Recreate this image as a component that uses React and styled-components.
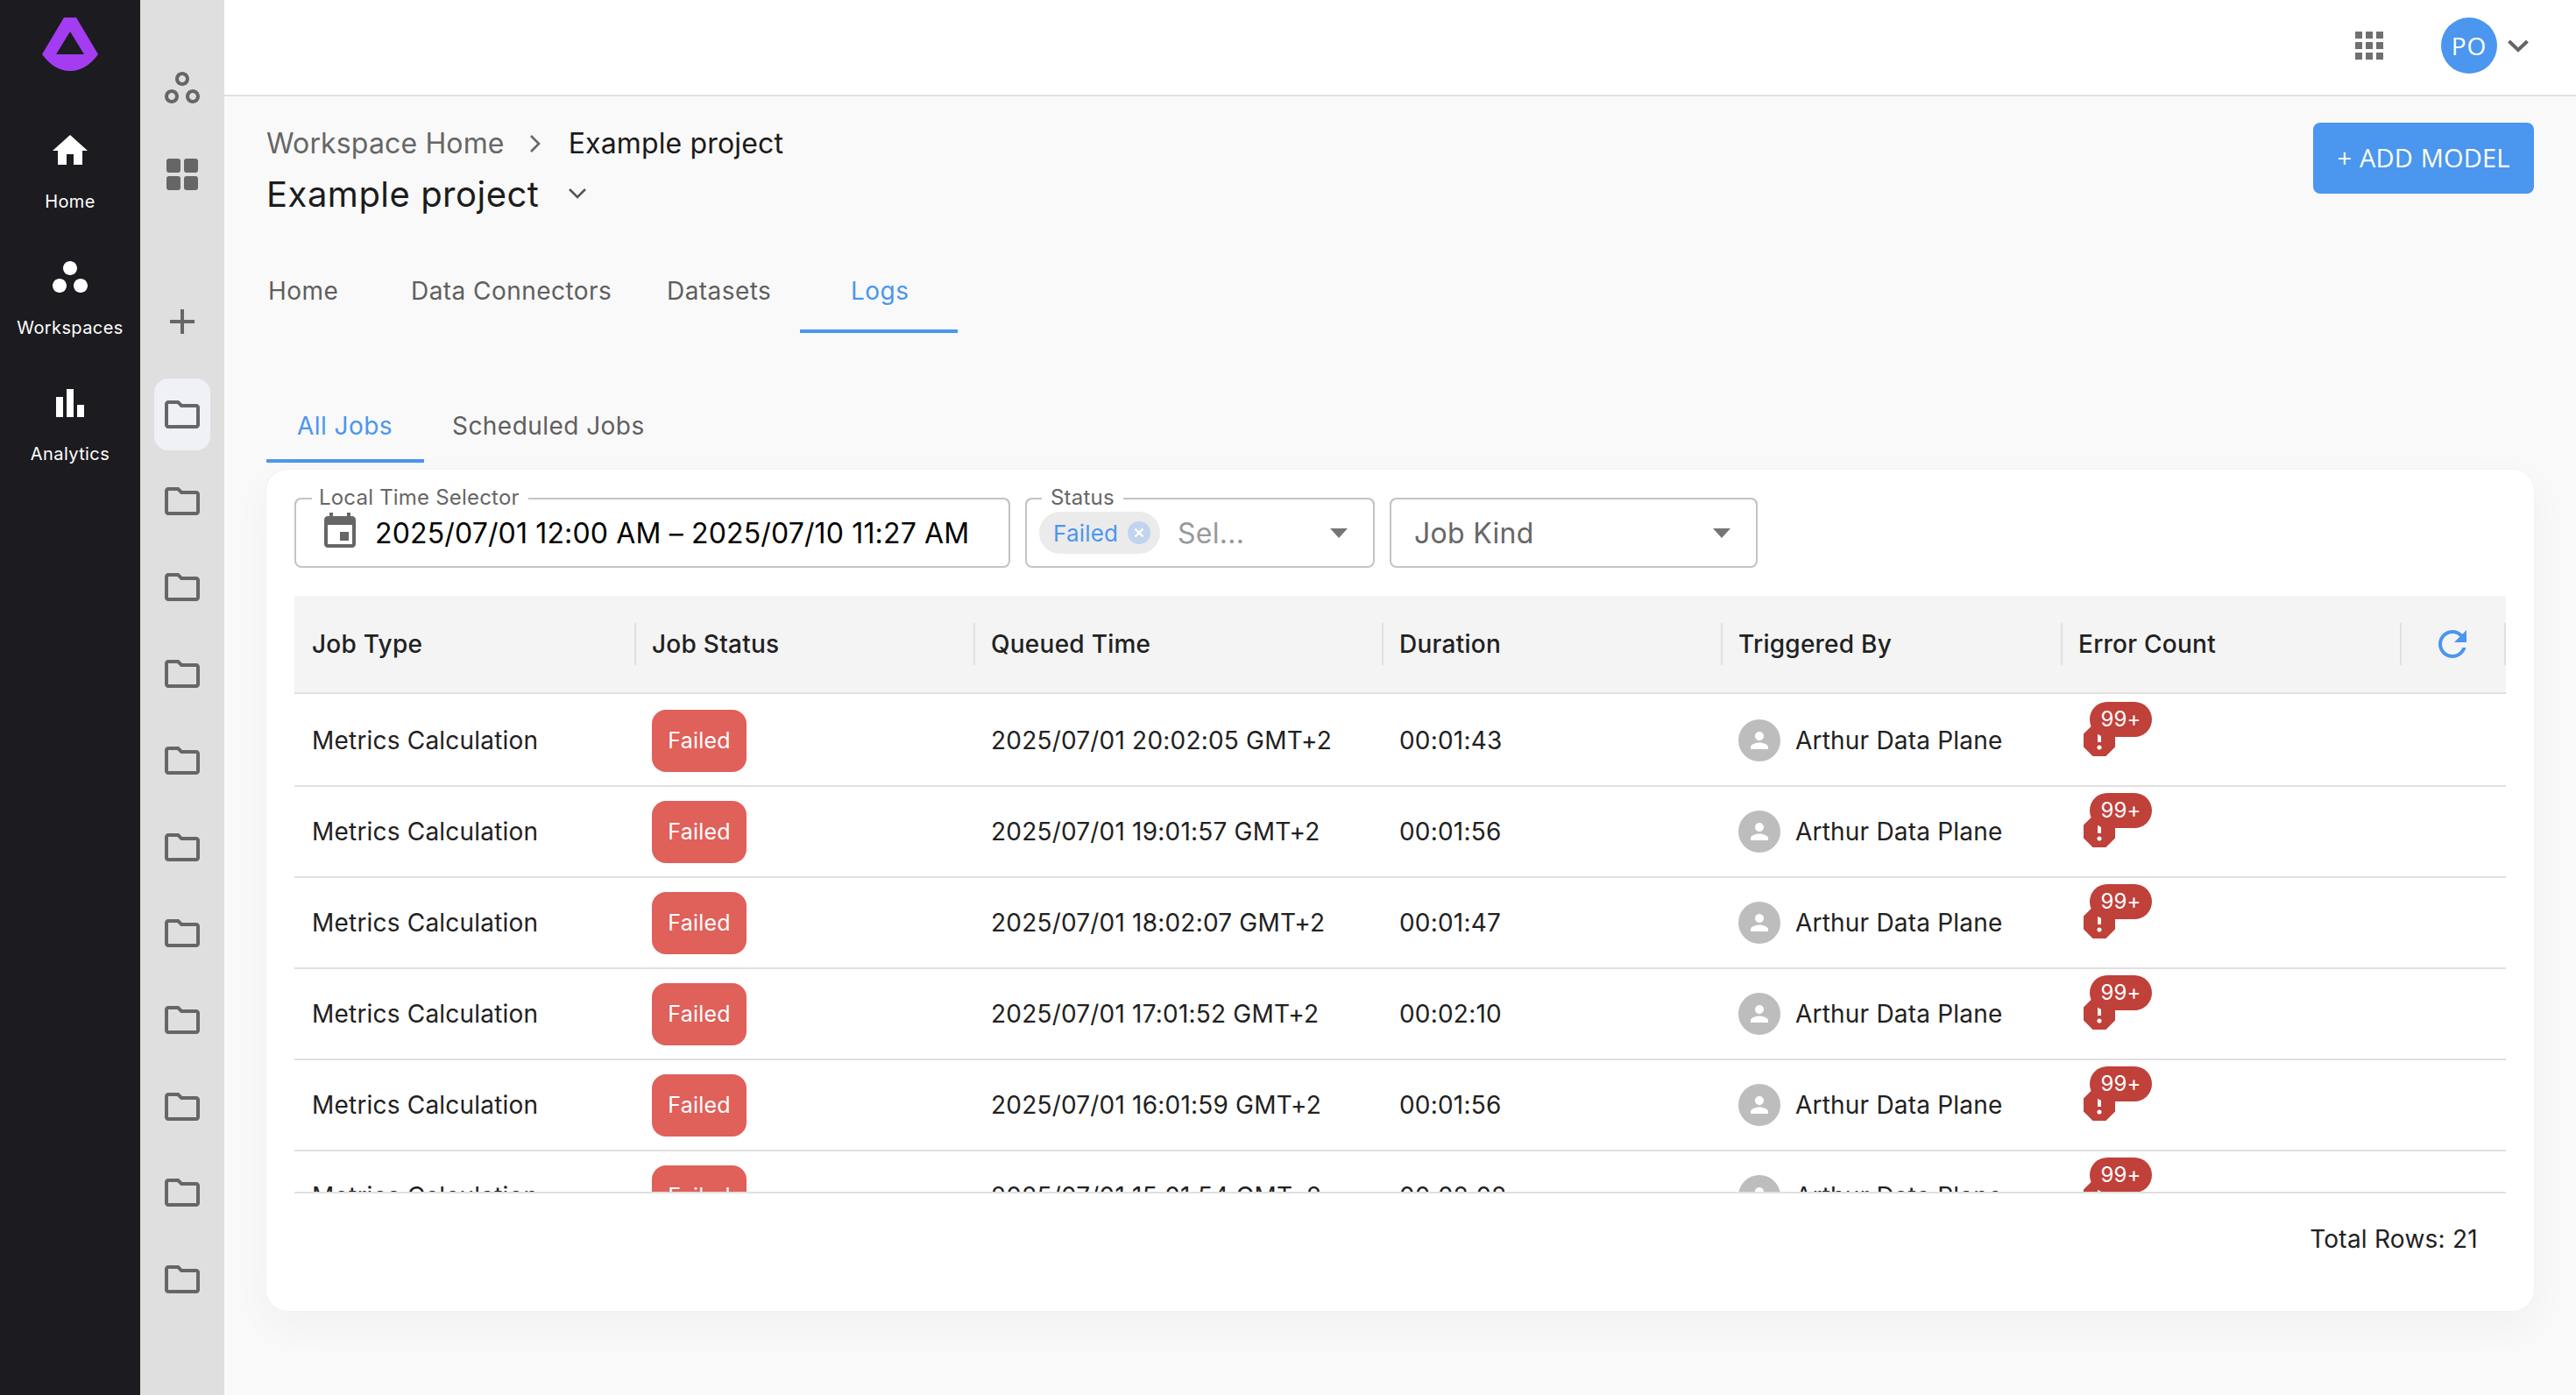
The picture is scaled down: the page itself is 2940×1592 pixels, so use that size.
import React from "react";
import styled, { createGlobalStyle } from "styled-components";

const Global = createGlobalStyle`
  html, body { margin: 0; padding: 0; background: #f9f9f9; }
  body { font-family: "Inter", "Liberation Sans", sans-serif; color: #212121; }
  * { box-sizing: border-box; }
`;

const Page = styled.div`
  display: flex;
  width: 2940px;
  height: 1592px;
  overflow: hidden;
`;

const Rail = styled.nav`
  width: 160px;
  flex: none;
  background: #1c1b20;
  display: flex;
  flex-direction: column;
  align-items: center;
  padding-top: 20px;
`;

const RailLogo = styled.svg`
  width: 64px;
  height: 61px;
  margin-bottom: 67px;
`;

const RailItem = styled.div`
  width: 160px;
  height: 144px;
  display: flex;
  flex-direction: column;
  align-items: center;
  color: #fff;
  svg { width: 48px; height: 48px; fill: #fff; }
`;

const RailLabel = styled.span`
  margin-top: 20px;
  font-size: 20px;
  line-height: 28px;
  letter-spacing: 0.4px;
  color: #fff;
`;

const SubRail = styled.aside`
  width: 96px;
  flex: none;
  background: #dfdfdf;
  display: flex;
  flex-direction: column;
  align-items: center;
  padding-top: 59px;
`;

const SubItem = styled.div`
  width: 64px;
  height: 82px;
  flex: none;
  margin-top: ${(p) => p.$mt || 0}px;
  margin-bottom: 16.7px;
  border-radius: 16px;
  background: ${(p) => (p.$active ? "#eff1f6" : "transparent")};
  display: flex;
  align-items: center;
  justify-content: center;
  svg { width: 48px; height: 48px; fill: #666; }
`;

const Main = styled.main`
  flex: 1;
  min-width: 0;
  display: flex;
  flex-direction: column;
  background: #f9f9f9;
`;

const Header = styled.header`
  height: 110px;
  flex: none;
  background: #fff;
  border-bottom: 2px solid #e0e0e0;
  display: flex;
  align-items: center;
  justify-content: flex-end;
  padding-right: 54px;
  padding-bottom: 4px;
`;

const Apps = styled.div`
  display: grid;
  grid-template-columns: repeat(3, 8px);
  grid-auto-rows: 8px;
  gap: 4px;
  margin-right: 66px;
  span { background: #707070; }
`;

const UserAvatar = styled.div`
  width: 64px;
  height: 64px;
  border-radius: 50%;
  background: #4b96ee;
  color: #fff;
  display: flex;
  align-items: center;
  justify-content: center;
  font-family: "Open Sans", sans-serif;
  font-size: 28px;
  letter-spacing: 1px;
`;

const UserChevron = styled.svg`
  width: 24px;
  height: 15px;
  margin-left: 12px;
  fill: none;
  stroke: #666;
  stroke-width: 4;
`;

const Content = styled.div`
  flex: 1;
  padding: 30px 48px 0;
  display: flex;
  flex-direction: column;
`;

const TopRow = styled.div`
  display: flex;
  justify-content: space-between;
  align-items: flex-start;
  height: 116px;
`;

const Crumbs = styled.div`
  height: 46px;
  padding-top: 1px;
  display: flex;
  align-items: center;
  font-size: 32px;
  line-height: 46px;
  letter-spacing: 0.15px;
  color: #666;
`;

const CrumbSeparator = styled.svg`
  width: 14px;
  height: 22px;
  margin: 0 31px 0 28px;
  fill: none;
  stroke: #666;
  stroke-width: 2.6;
`;

const CrumbCurrent = styled.span`
  color: #1a1a1a;
`;

const TitleRow = styled.div`
  height: 70px;
  display: flex;
  align-items: center;
`;

const Title = styled.h1`
  margin: 0;
  font-size: 40px;
  font-weight: 400;
  letter-spacing: 0.5px;
  color: #1c1c1c;
`;

const TitleChevron = styled.svg`
  width: 20px;
  height: 12px;
  margin-left: 34px;
  fill: none;
  stroke: #555;
  stroke-width: 2.6;
`;

const AddButton = styled.button`
  width: 252px;
  height: 81px;
  border: 0;
  border-radius: 8px;
  background: #4b96ee;
  color: #fff;
  font-family: "Open Sans", sans-serif;
  font-size: 29px;
  letter-spacing: 0.2px;
  word-spacing: 1px;
  padding: 0 0 2px;
`;

const TabBar = styled.div`
  display: flex;
  height: ${(p) => p.$h}px;
  margin-top: ${(p) => p.$mt}px;
`;

const Tab = styled.div`
  height: 100%;
  width: ${(p) => p.$w}px;
  flex: none;
  padding-left: ${(p) => p.$pad}px;
  padding-top: ${(p) => p.$top}px;
  font-size: 28px;
  line-height: 40px;
  letter-spacing: 0.45px;
  color: ${(p) => (p.$active ? "#4b96ee" : "#5f5f5f")};
  border-bottom: 4px solid ${(p) => (p.$active ? "#4b96ee" : "transparent")};
`;

const Card = styled.section`
  height: 960px;
  margin-top: 8px;
  padding: 32px 32px 0;
  background: #fff;
  border-radius: 24px;
  box-shadow: 0 0 0 1px #f2f2f2, 0 16px 48px rgba(0, 0, 0, 0.035);
`;

const Filters = styled.div`
  display: flex;
  gap: 17px;
  height: 80px;
`;

const Field = styled.fieldset`
  width: ${(p) => p.$w}px;
  height: 80px;
  margin: 0;
  padding: 2px 0 0;
  border: 2px solid #c4c4c4;
  border-top: 0;
  border-radius: 8px;
  position: relative;
  display: flex;
  align-items: center;
`;

const FieldEdge = styled.span`
  position: absolute;
  left: ${(p) => (p.$full ? 0 : p.$gapEnd)}px;
  ${(p) => (p.$left ? `width: ${p.$gap}px; left: -2px; border-top-right-radius: 0; border-left: 2px solid #c4c4c4; border-top-left-radius: 8px;` : "right: -2px; border-right: 2px solid #c4c4c4; border-top-right-radius: 8px;")}
  top: 0;
  height: 10px;
  border-top: 2px solid #c4c4c4;
`;

const Legend = styled.span`
  position: absolute;
  left: ${(p) => p.$x}px;
  top: -14px;
  font-size: 24px;
  line-height: 28px;
  letter-spacing: 0.2px;
  color: #666;
`;

const CalendarIcon = styled.svg`
  width: 48px;
  height: 48px;
  margin-left: 26px;
  fill: #666;
  flex: none;
  position: relative;
  top: -1px;
`;

const DateText = styled.span`
  margin-left: 16px;
  font-size: 32px;
  letter-spacing: 0.15px;
  color: #000;
  white-space: nowrap;
`;

const Chip = styled.div`
  width: 138px;
  height: 48px;
  margin-left: 14px;
  border-radius: 24px;
  background: #ebebeb;
  display: flex;
  align-items: center;
  padding-left: 16px;
  font-size: 26px;
  letter-spacing: 0.2px;
  color: #4b96ee;
`;

const ChipClose = styled.svg`
  width: 26px;
  height: 26px;
  margin-left: auto;
  margin-right: 11px;
`;

const Placeholder = styled.span`
  margin-left: ${(p) => p.$ml}px;
  font-size: 32px;
  letter-spacing: 0.3px;
  color: ${(p) => p.$color};
`;

const Caret = styled.svg`
  width: 20px;
  height: 11px;
  margin-left: auto;
  margin-right: 29px;
  fill: #757575;
  flex: none;
`;

const Table = styled.div`
  height: 682px;
  margin-top: 32px;
  overflow: hidden;
  border-bottom: 2px solid #e0e0e0;
`;

const COLS = "388px 387px 466px 387px 388px 387px 121px";

const HeadRow = styled.div`
  display: grid;
  grid-template-columns: ${COLS};
  height: 112px;
  background: #f4f4f4;
  border-bottom: 2px solid #e0e0e0;
  margin-bottom: 2px;
`;

const HeadCell = styled.div`
  display: flex;
  align-items: center;
  justify-content: space-between;
  padding-left: 20px;
  font-size: 28px;
  font-weight: 500;
  letter-spacing: 0.25px;
  color: #212121;
  &::after {
    content: "";
    width: 2px;
    height: 48px;
    margin-right: -2px;
    background: #e0e0e0;
  }
  &:last-child::after {
    margin-right: 0;
  }
`;

const RefreshIcon = styled.svg`
  width: 48px;
  height: 48px;
  fill: #4b96ee;
  margin-left: 16px;
`;

const Row = styled.div`
  display: grid;
  grid-template-columns: ${COLS};
  height: 104px;
  flex: none;
  border-bottom: 2px solid #e0e0e0;
`;

const Cell = styled.div`
  display: flex;
  align-items: center;
  padding-left: 20px;
  font-size: 28px;
  letter-spacing: 0.2px;
  color: #212121;
  white-space: nowrap;
`;

const StatusPill = styled.div`
  width: 108px;
  height: 71px;
  border-radius: 16px;
  background: #e0605a;
  color: #fff;
  display: flex;
  align-items: center;
  justify-content: center;
  font-size: 25px;
  letter-spacing: 0.2px;
`;

const PersonAvatar = styled.div`
  width: 48px;
  height: 48px;
  border-radius: 50%;
  background: #bdbdbd;
  margin-right: 17px;
  flex: none;
  display: flex;
  align-items: center;
  justify-content: center;
  svg { width: 30px; height: 30px; fill: #fff; }
`;

const ErrorWrap = styled.div`
  position: relative;
  width: 48px;
  height: 48px;
  svg { width: 48px; height: 48px; fill: #c0403a; display: block; }
`;

const ErrorBadge = styled.span`
  position: absolute;
  left: 13px;
  top: -20px;
  width: 71px;
  height: 40px;
  border-radius: 20px;
  background: #c0403a;
  color: #fff;
  font-size: 24px;
  line-height: 40px;
  text-align: center;
  letter-spacing: 0.2px;
`;

const Footer = styled.div`
  height: 104px;
  display: flex;
  align-items: center;
  justify-content: flex-end;
  padding-right: 32px;
  font-size: 28px;
  letter-spacing: 0.25px;
  color: #212121;
`;

const Home = () => (
  <svg viewBox="0 0 24 24"><path d="M10 20v-6h4v6h5v-8h3L12 3 2 12h3v8z" /></svg>
);
const Workspaces = () => (
  <svg viewBox="0 0 24 24"><path d="M6 13c-2.2 0-4 1.8-4 4s1.8 4 4 4 4-1.8 4-4-1.8-4-4-4zm12 0c-2.2 0-4 1.8-4 4s1.8 4 4 4 4-1.8 4-4-1.8-4-4-4zm-6-10C9.8 3 8 4.8 8 7s1.8 4 4 4 4-1.8 4-4-1.8-4-4-4z" /></svg>
);
const Bars = () => (
  <svg viewBox="0 0 24 24"><path d="M4 8.5h4V20H4zM10 4h4v16h-4zM16 13h4v7h-4z" /></svg>
);
const WorkspacesOutlined = () => (
  <svg viewBox="0 0 24 24"><path d="M6 15c1.1 0 2 .9 2 2s-.9 2-2 2-2-.9-2-2 .9-2 2-2m0-2c-2.2 0-4 1.8-4 4s1.8 4 4 4 4-1.8 4-4-1.8-4-4-4zm6-8c1.1 0 2 .9 2 2s-.9 2-2 2-2-.9-2-2 .9-2 2-2m0-2C9.8 3 8 4.8 8 7s1.8 4 4 4 4-1.8 4-4-1.8-4-4-4zm6 12c1.1 0 2 .9 2 2s-.9 2-2 2-2-.9-2-2 .9-2 2-2m0-2c-2.2 0-4 1.8-4 4s1.8 4 4 4 4-1.8 4-4-1.8-4-4-4z" /></svg>
);
const Tiles = () => (
  <svg viewBox="0 0 24 24">
    <rect x="3" y="3" width="8" height="8" rx="1.5" />
    <rect x="13" y="3" width="8" height="8" rx="1.5" />
    <rect x="3" y="13" width="8" height="8" rx="1.5" />
    <rect x="13" y="13" width="8" height="8" rx="1.5" />
  </svg>
);
const Plus = () => (
  <svg viewBox="0 0 24 24"><path d="M19 13h-6v6h-2v-6H5v-2h6V5h2v6h6v2z" /></svg>
);
const Folder = () => (
  <svg viewBox="0 0 24 24"><path d="M9.17 6l2 2H20v10H4V6h5.17M10 4H4c-1.1 0-1.99.9-1.99 2L2 18c0 1.1.9 2 2 2h16c1.1 0 2-.9 2-2V8c0-1.1-.9-2-2-2h-8l-2-2z" /></svg>
);
const Person = () => (
  <svg viewBox="0 0 24 24"><path d="M12 12c2.21 0 4-1.79 4-4s-1.79-4-4-4-4 1.79-4 4 1.79 4 4 4zm0 2c-2.67 0-8 1.34-8 4v2h16v-2c0-2.66-5.33-4-8-4z" /></svg>
);
const Report = () => (
  <svg viewBox="0 0 24 24"><path d="M15.73 3H8.27L3 8.27v7.46L8.27 21h7.46L21 15.73V8.27zM12 17.3c-.72 0-1.3-.58-1.3-1.3s.58-1.3 1.3-1.3 1.3.58 1.3 1.3-.58 1.3-1.3 1.3m1-4.3h-2V7h2z" /></svg>
);

const rows = [
  ["20:02:05", "00:01:43"],
  ["19:01:57", "00:01:56"],
  ["18:02:07", "00:01:47"],
  ["17:01:52", "00:02:10"],
  ["16:01:59", "00:01:56"],
  ["15:01:54", "00:02:02"],
];

export default function App() {
  return (
    <Page>
      <Global />
      <Rail>
        <RailLogo viewBox="48 20 64 61">
          <path
            fillRule="evenodd"
            fill="#a43cf2"
            d="M73 20H87L112 62Q98 81 80 81Q62 81 48 62ZM80 36L64 62H96Z"
          />
        </RailLogo>
        <RailItem><Home /><RailLabel>Home</RailLabel></RailItem>
        <RailItem><Workspaces /><RailLabel>Workspaces</RailLabel></RailItem>
        <RailItem><Bars /><RailLabel>Analytics</RailLabel></RailItem>
      </Rail>
      <SubRail>
        <SubItem><WorkspacesOutlined /></SubItem>
        <SubItem><Tiles /></SubItem>
        <SubItem $mt={70}><Plus /></SubItem>
        <SubItem $active $mt={7}><Folder /></SubItem>
        {Array.from({ length: 10 }).map((_, i) => (
          <SubItem key={i}><Folder /></SubItem>
        ))}
      </SubRail>
      <Main>
        <Header>
          <Apps>{Array.from({ length: 9 }).map((_, i) => <span key={i} />)}</Apps>
          <UserAvatar>PO</UserAvatar>
          <UserChevron viewBox="0 0 24 15"><path d="M1.5 2L12 12L22.5 2" /></UserChevron>
        </Header>
        <Content>
          <TopRow>
            <div>
              <Crumbs>
                Workspace Home
                <CrumbSeparator viewBox="0 0 14 22"><path d="M2 2L11 11L2 20" /></CrumbSeparator>
                <CrumbCurrent>Example project</CrumbCurrent>
              </Crumbs>
              <TitleRow>
                <Title>Example project</Title>
                <TitleChevron viewBox="0 0 20 12"><path d="M1 1L10 10L19 1" /></TitleChevron>
              </TitleRow>
            </div>
            <AddButton>+ ADD MODEL</AddButton>
          </TopRow>
          <TabBar $h={84} $mt={40}>
            <Tab $w={165} $pad={2} $top={16}>Home</Tab>
            <Tab $w={292} $top={16}>Data Connectors</Tab>
            <Tab $w={152} $top={16}>Datasets</Tab>
            <Tab $w={180} $pad={58} $top={16} $active>Logs</Tab>
          </TabBar>
          <TabBar $h={72} $mt={76}>
            <Tab $w={180} $pad={35} $top={10} $active>All Jobs</Tab>
            <Tab $w={284} $pad={32} $top={10}>Scheduled Jobs</Tab>
          </TabBar>
          <Card>
            <Filters>
              <Field $w={817}>
                <FieldEdge $left $gap={20} />
                <FieldEdge $gapEnd={265} />
                <Legend $x={26}>Local Time Selector</Legend>
                <CalendarIcon viewBox="0 0 24 24"><path d="M17 12h-5v5h5v-5zM16 1v2H8V1H6v2H5c-1.11 0-1.99.9-1.99 2L3 19c0 1.1.89 2 2 2h14c1.1 0 2-.9 2-2V5c0-1.1-.9-2-2-2h-1V1h-2zm3 18H5V8h14v11z" /></CalendarIcon>
                <DateText>2025/07/01 12:00 AM – 2025/07/10 11:27 AM</DateText>
              </Field>
              <Field $w={399}>
                <FieldEdge $left $gap={19} />
                <FieldEdge $gapEnd={110} />
                <Legend $x={27}>Status</Legend>
                <Chip>
                  Failed
                  <ChipClose viewBox="0 0 26 26">
                    <circle cx="13" cy="13" r="13" fill="#c0d4ee" />
                    <path d="M8.5 8.5L17.5 17.5M17.5 8.5L8.5 17.5" stroke="#fff" strokeWidth="2.4" />
                  </ChipClose>
                </Chip>
                <Placeholder $ml={20} $color="#999">Sel...</Placeholder>
                <Caret viewBox="0 0 20 11"><path d="M0 0H20L10 11Z" /></Caret>
              </Field>
              <Field $w={420}>
                <FieldEdge $left $gap={400} />
                <FieldEdge $gapEnd={300} />
                <Placeholder $ml={26} $color="#666">Job Kind</Placeholder>
                <Caret viewBox="0 0 20 11"><path d="M0 0H20L10 11Z" /></Caret>
              </Field>
            </Filters>
            <Table>
              <HeadRow>
                <HeadCell>Job Type</HeadCell>
                <HeadCell>Job Status</HeadCell>
                <HeadCell>Queued Time</HeadCell>
                <HeadCell>Duration</HeadCell>
                <HeadCell>Triggered By</HeadCell>
                <HeadCell>Error Count</HeadCell>
                <HeadCell>
                  <RefreshIcon viewBox="0 0 24 24"><path d="M17.65 6.35C16.2 4.9 14.21 4 12 4c-4.42 0-7.99 3.58-7.99 8s3.57 8 7.99 8c3.73 0 6.84-2.55 7.73-6h-2.08c-.82 2.33-3.04 4-5.65 4-3.31 0-6-2.69-6-6s2.69-6 6-6c1.66 0 3.14.69 4.22 1.78L13 11h7V4z" /></RefreshIcon>
                </HeadCell>
              </HeadRow>
              {rows.map(([time, dur]) => (
                <Row key={time}>
                  <Cell>Metrics Calculation</Cell>
                  <Cell><StatusPill>Failed</StatusPill></Cell>
                  <Cell>2025/07/01 {time} GMT+2</Cell>
                  <Cell>{dur}</Cell>
                  <Cell><PersonAvatar><Person /></PersonAvatar>Arthur Data Plane</Cell>
                  <Cell>
                    <ErrorWrap>
                      <Report />
                      <ErrorBadge>99+</ErrorBadge>
                    </ErrorWrap>
                  </Cell>
                  <Cell />
                </Row>
              ))}
            </Table>
            <Footer>Total Rows: 21</Footer>
          </Card>
        </Content>
      </Main>
    </Page>
  );
}
